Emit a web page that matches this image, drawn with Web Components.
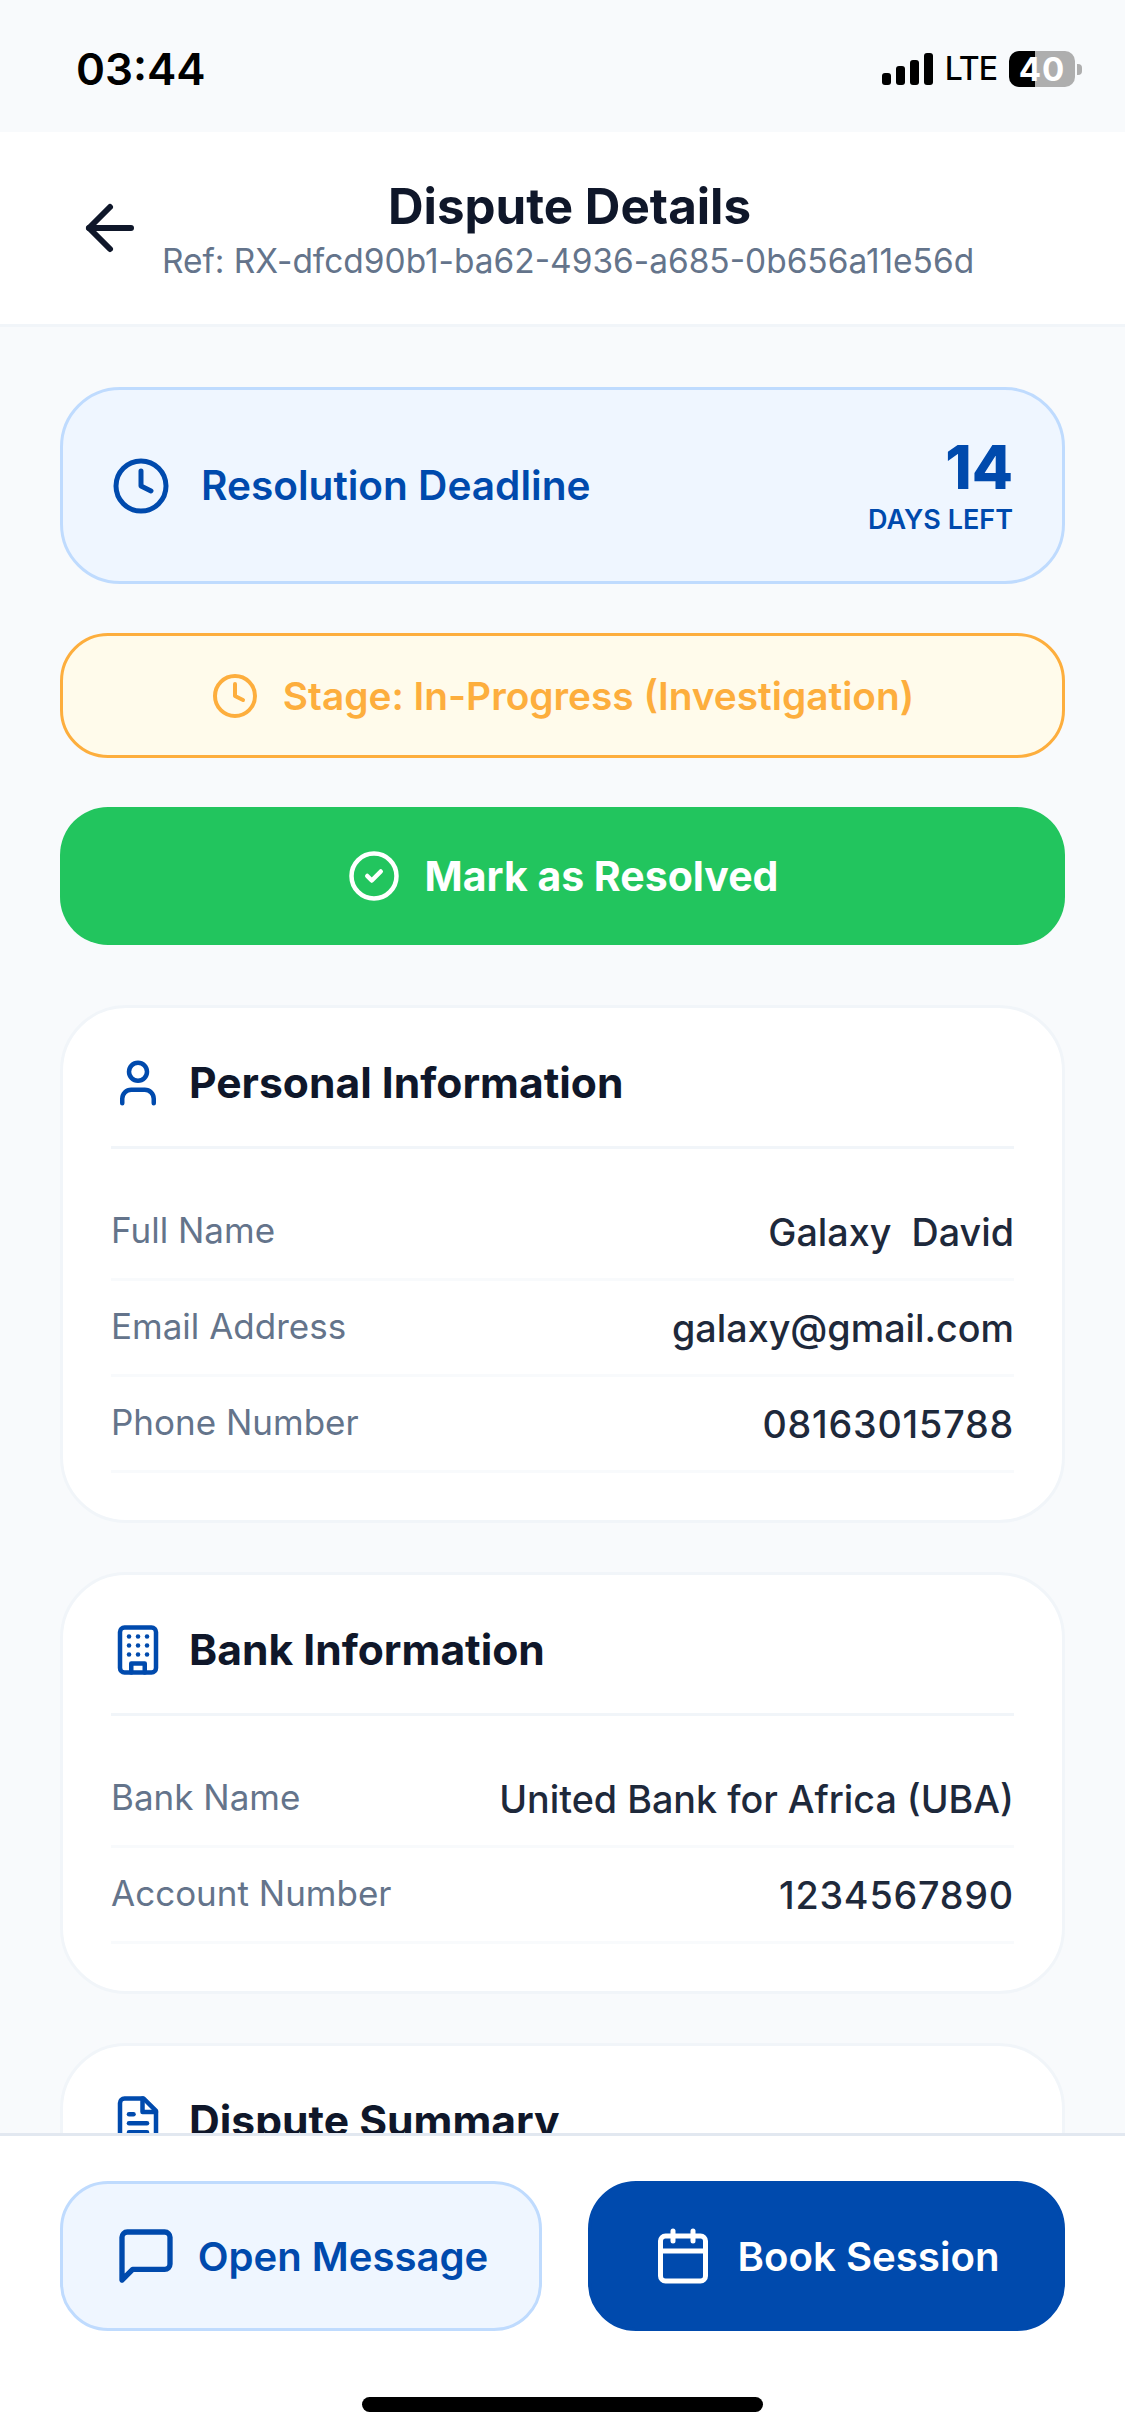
<!doctype html>
<html lang="en">
<head>
<meta charset="utf-8">
<title>Dispute Details</title>
<style>
  html, body { margin: 0; padding: 0; background: #f8fafc; }
  body { font-family: Inter, "Liberation Sans", sans-serif; }
</style>
</head>
<body>
<dispute-screen>
  <status-bar time="03:44" network="LTE" battery="40"></status-bar>
  <app-header title="Dispute Details" reference="Ref: RX-dfcd90b1-ba62-4936-a685-0b656a11e56d"></app-header>
  <scroll-area>
    <deadline-card label="Resolution Deadline" days="14"></deadline-card>
    <stage-banner>Stage: In-Progress (Investigation)</stage-banner>
    <resolve-button>Mark as Resolved</resolve-button>
    <info-card heading="Personal Information" icon="user">
      <info-row label="Full Name">Galaxy  David</info-row>
      <info-row label="Email Address">galaxy@gmail.com</info-row>
      <info-row label="Phone Number" numeric>08163015788</info-row>
    </info-card>
    <info-card heading="Bank Information" icon="building">
      <info-row label="Bank Name">United Bank for Africa (UBA)</info-row>
      <info-row label="Account Number" numeric>1234567890</info-row>
    </info-card>
    <info-card heading="Dispute Summary" icon="file"></info-card>
  </scroll-area>
  <action-bar>
    <action-button icon="message" icon-size="64" gap="20" width="482">Open Message</action-button>
    <action-button icon="calendar" icon-size="60" gap="24" width="477" primary>Book Session</action-button>
  </action-bar>
</dispute-screen>

<script>
const ICONS = {
  'arrow-left': '<path d="m12 19-7-7 7-7"/><path d="M19 12H5"/>',
  clock: '<circle cx="12" cy="12" r="10"/><polyline points="12 6 12 12 16 14"/>',
  'check-circle': '<circle cx="12" cy="12" r="10"/><path d="m9 12 2 2 4-4"/>',
  user: '<path d="M19 21v-2a4 4 0 0 0-4-4H9a4 4 0 0 0-4 4v2"/><circle cx="12" cy="7" r="4"/>',
  building: '<rect x="4" y="2" width="16" height="20" rx="2" ry="2"/><path d="M9 22v-4h6v4"/><path d="M8 6h.01"/><path d="M16 6h.01"/><path d="M12 6h.01"/><path d="M12 10h.01"/><path d="M12 14h.01"/><path d="M16 10h.01"/><path d="M16 14h.01"/><path d="M8 10h.01"/><path d="M8 14h.01"/>',
  file: '<path d="M14.5 2H6a2 2 0 0 0-2 2v16a2 2 0 0 0 2 2h12a2 2 0 0 0 2-2V7.5L14.5 2z"/><polyline points="14 2 14 8 20 8"/><line x1="16" y1="13" x2="8" y2="13"/><line x1="16" y1="17" x2="8" y2="17"/><line x1="10" y1="9" x2="8" y2="9"/>',
  message: '<path d="M21 15a2 2 0 0 1-2 2H7l-4 4V5a2 2 0 0 1 2-2h14a2 2 0 0 1 2 2z"/>',
  calendar: '<rect x="3" y="4" width="18" height="18" rx="2" ry="2"/><line x1="16" y1="2" x2="16" y2="6"/><line x1="8" y1="2" x2="8" y2="6"/><line x1="3" y1="10" x2="21" y2="10"/>'
};

class BaseElement extends HTMLElement {
  constructor() {
    super();
    this.attachShadow({ mode: 'open' });
  }

  connectedCallback() {
    this.shadowRoot.innerHTML = this.render();
  }

  attr(name, fallback = '') {
    return this.getAttribute(name) ?? fallback;
  }
}

class UiIcon extends BaseElement {
  render() {
    const size = this.attr('size', '54');
    return `
      <style>
        :host { display: block; flex: none; width: ${size}px; height: ${size}px; }
        svg { display: block; }
      </style>
      <svg width="${size}" height="${size}" viewBox="0 0 24 24" fill="none" stroke="currentColor"
        stroke-width="2" stroke-linecap="round" stroke-linejoin="round">${ICONS[this.attr('name')] ?? ''}</svg>`;
  }
}

class DisputeScreen extends BaseElement {
  render() {
    return `
      <style>
        :host { display: flex; flex-direction: column; width: 1125px; height: 2436px; overflow: hidden; background: #f8fafc; }
      </style>
      <slot></slot>`;
  }
}

class StatusBar extends BaseElement {
  render() {
    return `
      <style>
        :host { display: flex; flex: none; box-sizing: border-box; height: 132px; padding: 6px 43px 0 76px;
          align-items: center; justify-content: space-between; background: #f8fafc; color: #000; }
        .time { font-size: 44px; font-weight: 600; line-height: 52px; }
        .right { display: flex; align-items: center; }
        .signal { display: flex; align-items: flex-end; gap: 5px; height: 32px; margin-right: 12px; }
        .signal i { display: block; width: 9px; border-radius: 3px; background: #000; }
        .network { font-size: 32px; font-weight: 500; line-height: 36px; letter-spacing: -1px; margin-right: 12px; }
        .battery { display: flex; align-items: center; justify-content: center; width: 66px; height: 36px; border-radius: 10px;
          background: linear-gradient(90deg, #000 40%, #aeaeae 40%); color: #fff; font-size: 33px; font-weight: 700; letter-spacing: 1px; }
        .nub { width: 5px; height: 11px; margin-left: 2px; border-radius: 0 4px 4px 0; background: #aeaeae; }
      </style>
      <span class="time">${this.attr('time')}</span>
      <div class="right">
        <div class="signal">
          <i style="height:12px"></i><i style="height:19px"></i><i style="height:25px"></i><i style="height:32px"></i>
        </div>
        <span class="network">${this.attr('network')}</span>
        <div class="battery">${this.attr('battery')}</div>
        <div class="nub"></div>
      </div>`;
  }
}

class AppHeader extends BaseElement {
  render() {
    return `
      <style>
        :host { display: grid; flex: none; grid-template-columns: 1fr auto 1fr; align-items: center; box-sizing: content-box;
          height: 192px; padding: 0 60px; background: #fff; border-bottom: 3px solid #f1f5f9; }
        .back { margin-left: 14px; color: #0f172a; }
        .text { margin-left: 14px; text-align: center; }
        .title { font-size: 49.3px; font-weight: 700; line-height: 66px; color: #0f172a; }
        .ref { margin-left: -3px; font-size: 33.45px; line-height: 44px; color: #64748b; }
      </style>
      <div class="back"><ui-icon name="arrow-left" size="72"></ui-icon></div>
      <div class="text">
        <div class="title">${this.attr('title')}</div>
        <div class="ref">${this.attr('reference')}</div>
      </div>
      <div></div>`;
  }
}

class ScrollArea extends BaseElement {
  render() {
    return `
      <style>
        :host { display: flex; flex: 1; flex-direction: column; gap: 49px; min-height: 0; overflow: hidden; padding: 60px 60px 0; }
        ::slotted(*) { flex: none; }
      </style>
      <slot></slot>`;
  }
}

class DeadlineCard extends BaseElement {
  render() {
    return `
      <style>
        :host { display: flex; box-sizing: border-box; height: 197px; padding: 41px 49px 45px 48px; align-items: center;
          justify-content: space-between; border: 3px solid #bfdbfe; border-radius: 60px; background: #eff6ff; color: #004aad; }
        .left { display: flex; align-items: center; gap: 30px; margin-top: 5px; }
        .label { font-size: 40.6px; font-weight: 600; line-height: 54px; }
        .right { text-align: right; }
        .days { font-size: 60px; font-weight: 800; line-height: 72px; }
        .unit { font-size: 27px; font-weight: 600; line-height: 33px; }
      </style>
      <div class="left">
        <ui-icon name="clock" size="60"></ui-icon>
        <span class="label">${this.attr('label')}</span>
      </div>
      <div class="right">
        <div class="days">${this.attr('days')}</div>
        <div class="unit">DAYS LEFT</div>
      </div>`;
  }
}

class StageBanner extends BaseElement {
  render() {
    return `
      <style>
        :host { display: flex; box-sizing: border-box; height: 125px; align-items: center; justify-content: center; gap: 24px;
          border: 3px solid #fdae3d; border-radius: 48px; background: #fffbeb; color: #fdae3d;
          font-size: 38.8px; font-weight: 600; }
      </style>
      <ui-icon name="clock" size="48"></ui-icon>
      <span><slot></slot></span>`;
  }
}

class ResolveButton extends BaseElement {
  render() {
    return `
      <style>
        :host { display: flex; box-sizing: border-box; height: 138px; margin-bottom: 11px; align-items: center; justify-content: center;
          gap: 24px; border-radius: 48px; background: #22c55e; color: #fff; font-size: 41px; font-weight: 700; }
      </style>
      <ui-icon name="check-circle" size="54"></ui-icon>
      <span><slot></slot></span>`;
  }
}

class InfoCard extends BaseElement {
  render() {
    return `
      <style>
        :host { display: block; box-sizing: border-box; padding: 48px 48px 47px; border: 3px solid #f1f5f9; border-radius: 66px; background: #fff; }
        .head { display: flex; align-items: center; gap: 24px; height: 54px; padding-bottom: 36px; border-bottom: 3px solid #f1f5f9; }
        .icon { color: #004aad; }
        h2 { margin: 0; font-size: 42.6px; font-weight: 700; line-height: 54px; color: #0f172a; }
        .rows { display: flex; flex-direction: column; margin-top: 36px; }
      </style>
      <div class="head">
        <div class="icon"><ui-icon name="${this.attr('icon')}" size="54"></ui-icon></div>
        <h2>${this.attr('heading')}</h2>
      </div>
      <div class="rows"><slot></slot></div>`;
  }
}

class InfoRow extends BaseElement {
  render() {
    return `
      <style>
        :host { display: flex; box-sizing: border-box; height: 96px; align-items: center; justify-content: space-between;
          border-bottom: 3px solid #f8fafc; }
        .label { margin-bottom: 3px; font-size: 35px; color: #64748b; }
        .value { font-size: 37.7px; font-weight: 500; color: #1e293b; white-space: pre; }
        :host([numeric]) .value { letter-spacing: 0.8px; }
      </style>
      <span class="label">${this.attr('label')}</span>
      <span class="value"><slot></slot></span>`;
  }
}

class ActionBar extends BaseElement {
  render() {
    return `
      <style>
        :host { display: block; flex: none; height: 300px; box-sizing: content-box; border-top: 3px solid #e2e8f0; background: #fff; }
        .buttons { display: flex; justify-content: space-between; padding: 45px 60px 0; }
        .home { width: 401px; height: 15px; margin: 66px auto 0; border-radius: 8px; background: #000; }
      </style>
      <div class="buttons"><slot></slot></div>
      <div class="home"></div>`;
  }
}

class ActionButton extends BaseElement {
  render() {
    return `
      <style>
        :host { display: flex; flex: none; box-sizing: border-box; width: ${this.attr('width')}px; height: 150px; align-items: center;
          justify-content: center; gap: ${this.attr('gap')}px; border: 3px solid #bfdbfe; border-radius: 48px;
          background: #eff6ff; color: #004aad; font-size: 40.1px; font-weight: 600; }
        :host([primary]) { border-color: #004aad; background: #004aad; color: #fff; font-size: 40.2px; }
      </style>
      <ui-icon name="${this.attr('icon')}" size="${this.attr('icon-size')}"></ui-icon>
      <span><slot></slot></span>`;
  }
}

customElements.define('ui-icon', UiIcon);
customElements.define('status-bar', StatusBar);
customElements.define('app-header', AppHeader);
customElements.define('scroll-area', ScrollArea);
customElements.define('deadline-card', DeadlineCard);
customElements.define('stage-banner', StageBanner);
customElements.define('resolve-button', ResolveButton);
customElements.define('info-card', InfoCard);
customElements.define('info-row', InfoRow);
customElements.define('action-bar', ActionBar);
customElements.define('action-button', ActionButton);
customElements.define('dispute-screen', DisputeScreen);
</script>
</body>
</html>
